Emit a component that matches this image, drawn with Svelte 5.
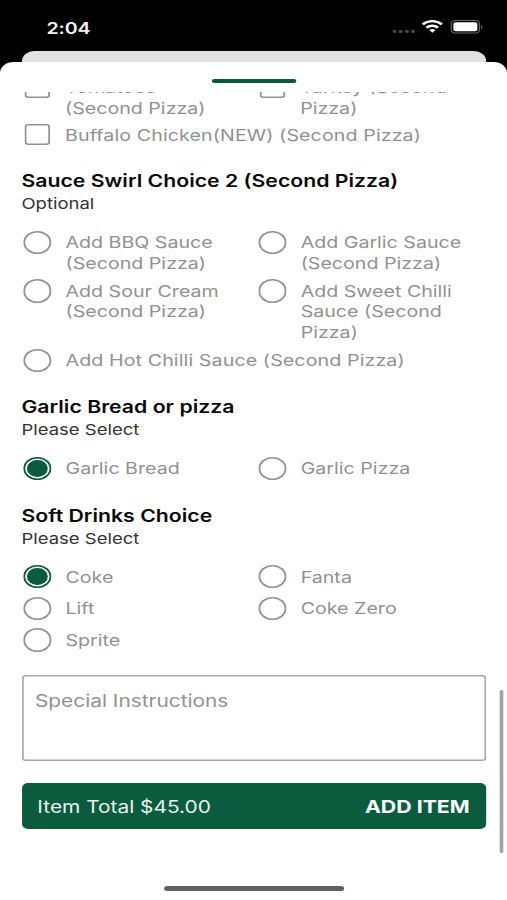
<script>
  let toppings = [
    { name: "Tomatoes (Second Pizza)" },
    { name: "Turkey (Second Pizza)" },
    { name: "Buffalo Chicken(NEW) (Second Pizza)", wide: true },
  ];

  let groups = [
    {
      title: "Sauce Swirl Choice 2 (Second Pizza)",
      hint: "Optional",
      selected: "",
      options: [
        { name: "Add BBQ Sauce (Second Pizza)" },
        { name: "Add Garlic Sauce (Second Pizza)" },
        { name: "Add Sour Cream (Second Pizza)" },
        { name: "Add Sweet Chilli Sauce (Second Pizza)" },
        { name: "Add Hot Chilli Sauce (Second Pizza)", wide: true },
      ],
    },
    {
      title: "Garlic Bread or pizza",
      hint: "Please Select",
      selected: "Garlic Bread",
      options: [{ name: "Garlic Bread" }, { name: "Garlic Pizza" }],
    },
    {
      title: "Soft Drinks Choice",
      hint: "Please Select",
      selected: "Coke",
      options: [
        { name: "Coke" },
        { name: "Fanta" },
        { name: "Lift" },
        { name: "Coke Zero" },
        { name: "Sprite" },
      ],
    },
  ];

  let total = 45;
  let instructions = "";
</script>

<style>
  :global(body) {
    background: #000;
    overflow: hidden;
  }

  .screen {
    width: 414px;
    height: 900px;
    display: flex;
    flex-direction: column;
    position: relative;
    transform: scaleX(1.22464);
    transform-origin: 0 0;
    background: #000;
    font-family: Inter, "Liberation Sans", sans-serif;
    overflow: hidden;
  }

  .status {
    height: 51px;
    flex: none;
    box-sizing: border-box;
    padding: 4px 20px 0 38px;
    display: flex;
    align-items: center;
    justify-content: space-between;
    color: #f4f4f4;
    font-size: 16px;
    font-weight: 600;
  }

  .status svg {
    display: block;
    margin-top: -1px;
  }

  .time {
    letter-spacing: -0.1px;
  }

  .behind {
    height: 11px;
    flex: none;
    margin: 0 17.5px;
    background: #e1e1e1;
    border-radius: 10px 10px 0 0;
  }

  .sheet {
    flex: 1;
    min-height: 0;
    display: flex;
    flex-direction: column;
    background: #fff;
    border-radius: 11px 11px 0 0;
  }

  .grabber {
    flex: none;
    width: 69px;
    height: 4.5px;
    margin: 16.5px auto 9px;
    border-radius: 3px;
    background: #0b5c3e;
  }

  .content {
    flex: 1;
    min-height: 0;
    overflow: hidden;
    padding: 0 17.5px;
  }

  .options {
    display: grid;
    grid-template-columns: 192px 1fr;
    row-gap: 7.6px;
    padding-left: 1.7px;
  }

  .toppings {
    margin: -14.7px 0 -0.9px;
    row-gap: 6.6px;
  }

  .option {
    display: flex;
    align-items: flex-start;
    gap: 11px;
    min-height: 24px;
    color: #919191;
    font-size: 16.05px;
    line-height: 20.5px;
  }

  .option span {
    max-width: 136px;
  }

  .wide {
    grid-column: span 2;
  }

  .option.wide span {
    max-width: none;
    letter-spacing: 0.08px;
  }

  input {
    appearance: none;
    flex: none;
    box-sizing: border-box;
    width: 23.3px;
    height: 23.3px;
    margin: -1.5px 0 0;
    border-radius: 50%;
    background: #fff;
    box-shadow: inset 0 0 0 1.6px #939393;
  }

  input[type="checkbox"] {
    width: 21.3px;
    height: 21.3px;
    margin: -1px 1px 0 0.6px;
    border-radius: 3px;
  }

  input:checked {
    padding: 3.2px;
    background: #0b5c3e content-box;
    box-shadow: inset 0 0 0 1.6px #0b5c3e;
  }

  h2 {
    margin: 21.3px 0 0;
    font-size: 17.35px;
    line-height: 24px;
    font-weight: 600;
    color: #0a0a0a;
  }

  .hint {
    margin: 0 0 18px;
    font-size: 15.1px;
    line-height: 21px;
    color: #333;
  }

  textarea {
    display: block;
    box-sizing: border-box;
    width: 100%;
    height: 86px;
    margin: 21.5px 0 0;
    padding: 15px 11px;
    border: 0;
    border-radius: 3px;
    box-shadow: inset 0 0 0 1.4px #a8a8a8;
    resize: none;
    font: 17.05px/21px Inter, "Liberation Sans", sans-serif;
  }

  textarea::placeholder {
    color: #919191;
  }

  .add {
    width: 100%;
    height: 46px;
    margin-top: 22px;
    padding: 0 13px;
    border: 0;
    border-radius: 5px;
    display: flex;
    align-items: center;
    justify-content: space-between;
    background: #0b5c3e;
    color: #e9f3ee;
    font: 17.05px Inter, "Liberation Sans", sans-serif;
  }

  .add b {
    font-weight: 700;
    font-size: 17.4px;
    color: #fff;
  }

  .scrollbar {
    position: absolute;
    right: 3.3px;
    top: 690px;
    width: 3px;
    height: 163px;
    border-radius: 2px;
    background: #a3a3a3;
  }

  .home {
    flex: none;
    width: 147px;
    height: 5px;
    margin: 0 auto 9px;
    border-radius: 3px;
    background: #606060;
  }
</style>

<div class="screen">
  <div class="status">
    <span class="time">2:04</span>
    <svg width="74" height="18" viewBox="0 0 74 18">
      <g fill="#4a4a4a">
        <circle cx="2.2" cy="13.4" r="1.6" />
        <circle cx="7.2" cy="13.4" r="1.6" />
        <circle cx="12.2" cy="13.4" r="1.6" />
        <circle cx="17.2" cy="13.4" r="1.6" />
      </g>
      <g fill="none" stroke="#fff" stroke-width="2.4">
        <path d="M25.2 6.3a11.2 11.2 0 0 1 15.6 0" />
        <path d="M28.3 9.7a6.8 6.8 0 0 1 9.4 0" />
      </g>
      <path d="M33 14.8l-2.5-2.7a3.6 3.6 0 0 1 5 0z" fill="#fff" />
      <rect x="48.500" y="2.5" width="23" height="12.5" rx="3.2" fill="none" stroke="#686868" />
      <rect x="50.2" y="4.2" width="19.6" height="9.1" rx="1.8" fill="#fff" />
      <path d="M72.8 7v4c1.5-.5 1.5-3.5 0-4z" fill="#686868" />
    </svg>
  </div>
  <div class="behind"></div>

  <div class="sheet">
    <div class="grabber"></div>
    <div class="content">
      <div class="options toppings">
        {#each toppings as t}
          <label class="option" class:wide={t.wide}>
            <input type="checkbox" />
            <span>{t.name}</span>
          </label>
        {/each}
      </div>

      {#each groups as g}
        <h2>{g.title}</h2>
        <p class="hint">{g.hint}</p>
        <div class="options">
          {#each g.options as o}
            <label class="option" class:wide={o.wide}>
              <input type="radio" name={g.title} value={o.name} bind:group={g.selected} />
              <span>{o.name}</span>
            </label>
          {/each}
        </div>
      {/each}

      <textarea placeholder="Special Instructions" bind:value={instructions}></textarea>
      <button class="add">
        <span>Item Total ${total.toFixed(2)}</span>
        <b>ADD ITEM</b>
      </button>
    </div>
    <div class="home"></div>
  </div>
  <div class="scrollbar"></div>
</div>
